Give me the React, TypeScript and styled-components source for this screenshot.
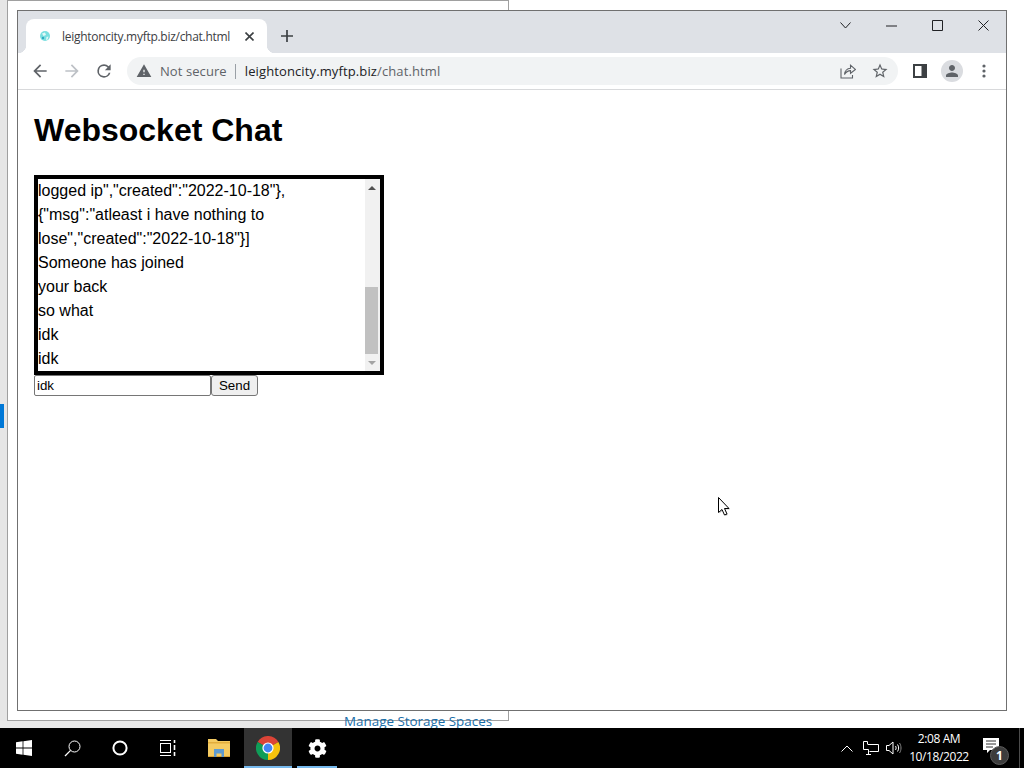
import React from "react";
import styled, { createGlobalStyle } from "styled-components";
import { FaCog } from "react-icons/fa";

const GlobalStyle = createGlobalStyle`
  html, body {
    margin: 0;
    padding: 0;
    background: #fff;
  }
  #root {
    width: 1024px;
    height: 768px;
    overflow: hidden;
  }
`;

const Screen = styled("div")`
  width: 1024px;
  height: 768px;
  display: flex;
  flex-direction: column;
  font-family: "Liberation Sans", Arial, sans-serif;
`;

const Desktop = styled("div")`
  position: relative;
  flex: 0 0 728px;
  overflow: hidden;
  background: #fff;
`;

const SideRail = styled("div")`
  position: absolute;
  left: 0;
  top: 0;
  width: 7px;
  height: 728px;
  background: #e6e6e6;
`;

const RailMarker = styled("div")`
  position: absolute;
  left: 0;
  top: 404px;
  width: 4px;
  height: 24px;
  background: #0078d7;
`;

const FooterStrip = styled("div")`
  position: absolute;
  left: 0;
  top: 721px;
  width: 320px;
  height: 7px;
  background: #e8e8e8;
`;

const BackWindow = styled("div")`
  position: absolute;
  left: 7px;
  top: 0;
  width: 502px;
  height: 721px;
  box-sizing: border-box;
  border: 1px solid #a0a0a0;
  background: #fff;
`;

const BackLink = styled("a")`
  position: absolute;
  left: 344px;
  top: 712px;
  font-family: "Open Sans", sans-serif;
  font-size: 13.4px;
  line-height: 18px;
  color: #1a6ea8;
  white-space: nowrap;
`;

const BrowserWindow = styled("div")`
  position: absolute;
  left: 17px;
  top: 10px;
  width: 990px;
  height: 701px;
  box-sizing: border-box;
  border: 1px solid #707070;
  background: #fff;
  display: flex;
  flex-direction: column;
`;

const TabStrip = styled("div")`
  flex: 0 0 42px;
  display: flex;
  align-items: flex-end;
  padding-left: 8px;
  background: #dee1e6;
`;

const Tab = styled("div")`
  position: relative;
  width: 241px;
  height: 34px;
  box-sizing: border-box;
  padding: 0 13px 0 13px;
  display: flex;
  align-items: center;
  gap: 11px;
  background: #fff;
  border-radius: 8px 8px 0 0;
  &::before,
  &::after {
    content: "";
    position: absolute;
    bottom: 0;
    width: 8px;
    height: 8px;
  }
  &::before {
    left: -8px;
    background: radial-gradient(circle at 0 0, transparent 8px, #fff 8.5px);
  }
  &::after {
    right: -8px;
    background: radial-gradient(circle at 100% 0, transparent 8px, #fff 8.5px);
  }
`;

const TabTitle = styled("span")`
  flex: 1;
  font-family: "Open Sans", sans-serif;
  font-size: 12px;
  letter-spacing: -0.28px;
  color: #3c4043;
  white-space: nowrap;
`;

const IconButton = styled("div")<{ $width?: number }>`
  flex: 0 0 ${(p) => p.$width ?? 32}px;
  height: 28px;
  display: flex;
  align-items: center;
  justify-content: center;
`;

const NewTab = styled(IconButton)`
  margin-left: 6px;
  height: 34px;
`;

const WindowControls = styled("div")`
  margin-left: auto;
  align-self: flex-start;
  display: flex;
`;

const WindowControl = styled("div")`
  width: 46px;
  height: 29px;
  display: flex;
  align-items: center;
  justify-content: center;
`;

const Toolbar = styled("div")`
  flex: 0 0 37px;
  box-sizing: border-box;
  display: flex;
  align-items: center;
  padding: 0 6px;
  border-bottom: 1px solid #d8d9db;
  background: #fff;
`;

const Omnibox = styled("div")`
  flex: 1;
  height: 28px;
  margin: 0 6px 0 7px;
  padding: 0 2px 0 9px;
  display: flex;
  align-items: center;
  background: #f1f3f4;
  border-radius: 14px;
  font-family: "Open Sans", sans-serif;
  font-size: 13px;
  white-space: nowrap;
`;

const NotSecure = styled("span")`
  margin-left: 8px;
  padding-right: 8px;
  border-right: 1px solid #9aa0a6;
  line-height: 15px;
  color: #5f6368;
  letter-spacing: 0.08px;
`;

const Url = styled("span")`
  flex: 1;
  margin-left: 9px;
  color: #5f6368;
  letter-spacing: 0.12px;
  b {
    font-weight: 400;
    color: #202124;
  }
`;

const ProfileBadge = styled("div")`
  width: 22px;
  height: 22px;
  border-radius: 50%;
  background: #dadce0;
  display: flex;
  align-items: center;
  justify-content: center;
`;

const Page = styled("main")`
  flex: 1;
  padding: 22px 16px 0;
  background: #fff;
`;

const Title = styled("h1")`
  margin: 0 0 26px;
  font-size: 32px;
  line-height: 37px;
  font-weight: 700;
  color: #000;
`;

const ChatBox = styled("div")`
  width: 350px;
  height: 200px;
  box-sizing: border-box;
  border: 4px solid #000;
  display: flex;
`;

const Messages = styled("div")`
  flex: 1;
  font-size: 16px;
  line-height: 24px;
  color: #000;
  white-space: nowrap;
`;

const ScrollTrack = styled("div")`
  position: relative;
  flex: 0 0 15px;
  background: #f1f1f1;
`;

const ScrollArrow = styled("div")<{ $down?: boolean }>`
  position: absolute;
  left: 3px;
  ${(p) => (p.$down ? "bottom: 6px;" : "top: 7px;")}
  width: 0;
  height: 0;
  border-left: 4px solid transparent;
  border-right: 4px solid transparent;
  ${(p) =>
    p.$down
      ? "border-top: 4px solid #a3a3a3;"
      : "border-bottom: 4px solid #505050;"}
`;

const ScrollThumb = styled("div")`
  position: absolute;
  left: 0;
  right: 2px;
  top: 108px;
  height: 67px;
  background: #c1c1c1;
`;

const SendRow = styled("form")`
  display: flex;
  margin: 0;
`;

const MessageInput = styled("input")`
  width: 177px;
  height: 21px;
  box-sizing: border-box;
  padding: 1px 2px;
  border: 1px solid #767676;
  border-radius: 2px;
  font-family: "Liberation Sans", Arial, sans-serif;
  font-size: 13.33px;
  color: #000;
`;

const SendButton = styled("button")`
  width: 47px;
  height: 21px;
  box-sizing: border-box;
  padding: 0;
  border: 1px solid #767676;
  border-radius: 3px;
  background: #efefef;
  font-family: "Liberation Sans", Arial, sans-serif;
  font-size: 13.33px;
  color: #000;
`;

const Pointer = styled("svg")`
  position: absolute;
  left: 717px;
  top: 496px;
`;

const Taskbar = styled("footer")`
  flex: 0 0 40px;
  display: flex;
  background: #000;
`;

const TaskGroup = styled("div")`
  display: flex;
  gap: 1px;
  margin-left: 3px;
`;

const TaskButton = styled("div")<{ $active?: boolean; $running?: boolean }>`
  position: relative;
  width: 48px;
  height: 40px;
  display: flex;
  align-items: center;
  justify-content: center;
  background: ${(p) => (p.$active ? "#333" : "transparent")};
  &::after {
    content: "";
    display: ${(p) => (p.$active || p.$running ? "block" : "none")};
    position: absolute;
    bottom: 0;
    height: 2px;
    left: ${(p) => (p.$active ? 0 : 4)}px;
    right: ${(p) => (p.$active ? 0 : 4)}px;
    background: #76b9ed;
  }
`;

const Tray = styled("div")`
  margin-left: auto;
  display: flex;
  align-items: center;
`;

const TrayIcon = styled("div")<{ $width: number }>`
  width: ${(p) => p.$width}px;
  display: flex;
  justify-content: center;
`;

const Clock = styled("div")`
  width: 68px;
  font-family: "Open Sans", sans-serif;
  font-size: 12px;
  line-height: 18px;
  letter-spacing: -0.4px;
  color: #fff;
  text-align: center;
`;

const Notifications = styled("div")`
  position: relative;
  width: 38px;
  height: 40px;
  display: flex;
  align-items: center;
  justify-content: center;
`;

const NotificationCount = styled("span")`
  position: absolute;
  left: 17px;
  top: 18px;
  width: 17px;
  height: 17px;
  border: 1px solid #5c5c5c;
  border-radius: 50%;
  background: #3c3c3c;
  font-family: "Open Sans", sans-serif;
  font-size: 12px;
  font-weight: 700;
  line-height: 17px;
  text-align: center;
  color: #fff;
`;

const ShowDesktop = styled("div")`
  width: 1px;
  height: 40px;
  margin: 0 4px 0 8px;
  background: #4b4b4b;
`;

const Material = ({ d, color = "#5f6368", size = 18 }: { d: string; color?: string; size?: number }) => (
  <svg width={size} height={size} viewBox="0 0 24 24" fill={color}>
    <path d={d} />
  </svg>
);

const BACK = "M20 11H7.83l5.59-5.59L12 4l-8 8 8 8 1.41-1.41L7.83 13H20z";
const FORWARD = "M4 11h12.17l-5.59-5.59L12 4l8 8-8 8-1.41-1.41L16.17 13H4z";
const RELOAD =
  "M17.65 6.35A7.96 7.96 0 0 0 12 4a8 8 0 1 0 7.73 10h-2.08A6 6 0 1 1 12 6c1.66 0 3.14.69 4.22 1.78L13 11h7V4z";
const WARNING = "M1 21h22L12 2 1 21zm12-3h-2v-2h2v2zm0-4h-2v-4h2v4z";
const STAR =
  "M22 9.24l-7.19-.62L12 2 9.19 8.63 2 9.24l5.46 4.73L5.82 21 12 17.27 18.18 21l-1.64-7.03L22 9.24zM12 15.4l-3.76 2.27 1-4.28-3.32-2.88 4.38-.38L12 6.1l1.71 4.04 4.38.38-3.32 2.88 1 4.28L12 15.4z";
const PERSON =
  "M12 12c2.21 0 4-1.79 4-4s-1.79-4-4-4-4 1.79-4 4 1.79 4 4 4zm0 2c-2.67 0-8 1.34-8 4v2h16v-2c0-2.66-5.33-4-8-4z";

const Favicon = () => (
  <svg width="12" height="12" viewBox="0 0 12 12">
    <circle cx="6" cy="6" r="5" fill="#7adfe0" />
    <path d="M3 3.5 6 2.5 7 5 4.5 6zM7.5 7l2-.5-1 3-1.5.5z" fill="#e4f8f7" />
    <circle cx="4" cy="8" r="1.2" fill="#2fa8c0" />
  </svg>
);

const ShareIcon = () => (
  <svg width="16" height="16" viewBox="0 0 16 16" fill="none" stroke="#5f6368" strokeWidth="1.1">
    <path d="M1 5.5V15h11.5v-3" />
    <path d="M4.5 11.5C5 7.5 8 5.5 10.5 5.3V2.2L15.5 6.5l-5 3.8V7.6C8 7.6 6 9 4.5 11.5z" />
  </svg>
);

const SidePanelIcon = () => (
  <svg width="14" height="14" viewBox="0 0 14 14">
    <path fillRule="evenodd" d="M0 0h14v14H0zM2 2v10h6.5V2z" fill="#3c4043" />
  </svg>
);

const DotsIcon = () => (
  <svg width="4" height="14" viewBox="0 0 4 14" fill="#5f6368">
    <circle cx="2" cy="2" r="1.6" />
    <circle cx="2" cy="7" r="1.6" />
    <circle cx="2" cy="12" r="1.6" />
  </svg>
);

const PlusIcon = () => (
  <svg width="12" height="12" viewBox="0 0 12 12" stroke="#3c4043" strokeWidth="1.7">
    <path d="M6 0v12M0 6h12" />
  </svg>
);

const TabClose = () => (
  <svg width="9" height="9" viewBox="0 0 9 9" stroke="#3c4043" strokeWidth="1.6">
    <path d="M.5.5l8 8M8.500.5l-8 8" />
  </svg>
);

const WindowGlyph = ({ d, w = 11, h = 11 }: { d: string; w?: number; h?: number }) => (
  <svg width={w} height={h} viewBox={`0 0 ${w} ${h}`} fill="none" stroke="#202124" strokeWidth="1">
    <path d={d} />
  </svg>
);

const WindowsLogo = () => (
  <svg width="16" height="16" viewBox="0 0 16 16" fill="#fff">
    <path d="M0 2.300 6.600 1.300v6.200H0zM7.400 1.200 16 0v7.500H7.400zM0 8.400h6.600v6.300L0 13.700zM7.400 8.400H16V16l-8.600-1.200z" />
  </svg>
);

const SearchIcon = () => (
  <svg width="17" height="17" viewBox="0 0 17 17" fill="none" stroke="#fff" strokeWidth="1">
    <circle cx="10.500" cy="6.500" r="5.500" />
    <path d="M6.600 10.400 1 16" strokeWidth="1.300" />
  </svg>
);

const CortanaIcon = () => (
  <svg width="16" height="16" viewBox="0 0 16 16" fill="none" stroke="#fff" strokeWidth="2">
    <circle cx="8" cy="8" r="6.600" />
  </svg>
);

const TaskViewIcon = () => (
  <svg width="16" height="16" viewBox="0 0 16 16" fill="none" stroke="#fff" strokeWidth="1">
    <path d="M0 .5h11M0 15.500h11" />
    <rect x=".5" y="3.500" width="10" height="9" />
    <path d="M14.500 0v3M14.500 5v5M14.500 12v4" strokeWidth="1.600" />
  </svg>
);

const FolderIcon = () => (
  <svg width="22" height="18" viewBox="0 0 22 18">
    <path d="M0 0h8l2 2h12v16H0z" fill="#f5cb62" />
    <path d="M0 3h22v1.500H0z" fill="#e2ad3c" />
    <path d="M0 17h22v1H0z" fill="#d9a232" />
    <path d="M6 10h10v8h-2.500v-3.500h-5V18H6z" fill="#5e9bd1" />
  </svg>
);

const ChromeIcon = () => (
  <svg width="24" height="24" viewBox="0 0 24 24">
    <path d="M12 12 1.600 6A12 12 0 0 1 22.400 6z" fill="#db4437" />
    <path d="M12 12 22.400 6A12 12 0 0 1 12 24z" fill="#f4c20d" />
    <path d="M12 12 12 24A12 12 0 0 1 1.600 6z" fill="#0f9d58" />
    <circle cx="12" cy="12" r="5.600" fill="#fff" />
    <circle cx="12" cy="12" r="4.400" fill="#4285f4" />
  </svg>
);

const TrayChevron = () => (
  <svg width="12" height="7" viewBox="0 0 12 7" fill="none" stroke="#fff" strokeWidth="1">
    <path d="M.5 6.500 6 1l5.500 5.500" />
  </svg>
);

const NetworkIcon = () => (
  <svg width="16" height="14" viewBox="0 0 16 14" fill="none" stroke="#fff" strokeWidth="1">
    <path d="M4.500 3.500V.5H.5v8h5M5 3.500h10.500v7H6.500" />
    <path d="M5.500 8.500v5M3 13.500h5" />
  </svg>
);

const VolumeIcon = () => (
  <svg width="16" height="14" viewBox="0 0 16 14" fill="none" stroke="#fff" strokeWidth="1">
    <path d="M.5 4.500h2.500L7 1v12L3 9.500H.5z" />
    <path d="M9.500 5c.8 1.200.8 2.800 0 4M11.500 3.500c1.500 2 1.500 5 0 7" />
    <path d="M13.500 2c2 3 2 7 0 10" stroke="#888" />
  </svg>
);

const NotificationBubble = styled("svg")`
  margin: -3px 2px 0 0;
`;

const NotificationIcon = () => (
  <NotificationBubble width="16" height="17" viewBox="0 0 16 17">
    <path d="M0 0h16v12H7l-3 3v-3H0z" fill="#fff" />
    <path d="M3 3h10M3 6h10M3 9h7" stroke="#333" strokeWidth="1" />
  </NotificationBubble>
);

const messages = [
  'logged ip","created":"2022-10-18"},',
  '{"msg":"atleast i have nothing to',
  'lose","created":"2022-10-18"}]',
  "Someone has joined",
  "your back",
  "so what",
  "idk",
  "idk",
];

function App() {
  return (
    <Screen>
      <GlobalStyle />
      <Desktop>
        <SideRail />
        <RailMarker />
        <BackWindow />
        <FooterStrip />
        <BackLink>Manage Storage Spaces</BackLink>
        <BrowserWindow>
          <TabStrip>
            <Tab>
              <Favicon />
              <TabTitle>leightoncity.myftp.biz/chat.html</TabTitle>
              <TabClose />
            </Tab>
            <NewTab $width={28}>
              <PlusIcon />
            </NewTab>
            <WindowControls>
              <WindowControl>
                <WindowGlyph w={11} h={7} d="M.5.500 5.500 6 10.500.500" />
              </WindowControl>
              <WindowControl>
                <WindowGlyph h={2} d="M0 1h11" />
              </WindowControl>
              <WindowControl>
                <WindowGlyph d="M.5.500h10v10H.5z" />
              </WindowControl>
              <WindowControl>
                <WindowGlyph d="M.5.500l10 10M10.500.500l-10 10" />
              </WindowControl>
            </WindowControls>
          </TabStrip>
          <Toolbar>
            <IconButton>
              <Material d={BACK} size={20} />
            </IconButton>
            <IconButton>
              <Material d={FORWARD} color="#bdc1c6" size={20} />
            </IconButton>
            <IconButton>
              <Material d={RELOAD} size={20} />
            </IconButton>
            <Omnibox>
              <Material d={WARNING} size={16} />
              <NotSecure>Not secure</NotSecure>
              <Url>
                <b>leightoncity.myftp.biz</b>/chat.html
              </Url>
              <IconButton>
                <ShareIcon />
              </IconButton>
              <IconButton>
                <Material d={STAR} size={18} />
              </IconButton>
            </Omnibox>
            <IconButton>
              <SidePanelIcon />
            </IconButton>
            <IconButton>
              <ProfileBadge>
                <Material d={PERSON} size={18} />
              </ProfileBadge>
            </IconButton>
            <IconButton>
              <DotsIcon />
            </IconButton>
          </Toolbar>
          <Page>
            <Title>Websocket Chat</Title>
            <ChatBox>
              <Messages>
                {messages.map((line, i) => (
                  <div key={i}>{line}</div>
                ))}
              </Messages>
              <ScrollTrack>
                <ScrollArrow />
                <ScrollThumb />
                <ScrollArrow $down />
              </ScrollTrack>
            </ChatBox>
            <SendRow>
              <MessageInput defaultValue="idk" />
              <SendButton type="button">Send</SendButton>
            </SendRow>
          </Page>
        </BrowserWindow>
        <Pointer width="16" height="22" viewBox="0 0 16 22">
          <path d="M2.500 2.500v15l3.500-3 2.500 5.500 2.500-1-2.500-5.500H13z" fill="#000" opacity=".2" />
          <path d="M1.500 1.500v15l3.500-3 2.500 5.500 2.500-1-2.500-5.500H12z" fill="#fff" stroke="#000" strokeWidth="1" />
        </Pointer>
      </Desktop>
      <Taskbar>
        <TaskButton>
          <WindowsLogo />
        </TaskButton>
        <TaskButton>
          <SearchIcon />
        </TaskButton>
        <TaskButton>
          <CortanaIcon />
        </TaskButton>
        <TaskButton>
          <TaskViewIcon />
        </TaskButton>
        <TaskGroup>
          <TaskButton>
            <FolderIcon />
          </TaskButton>
          <TaskButton $active>
            <ChromeIcon />
          </TaskButton>
          <TaskButton $running>
            <FaCog size={19} color="#fff" />
          </TaskButton>
        </TaskGroup>
        <Tray>
          <TrayIcon $width={24}>
            <TrayChevron />
          </TrayIcon>
          <TrayIcon $width={24}>
            <NetworkIcon />
          </TrayIcon>
          <TrayIcon $width={22}>
            <VolumeIcon />
          </TrayIcon>
          <Clock>
            <div>2:08 AM</div>
            <div>10/18/2022</div>
          </Clock>
          <Notifications>
            <NotificationIcon />
            <NotificationCount>1</NotificationCount>
          </Notifications>
          <ShowDesktop />
        </Tray>
      </Taskbar>
    </Screen>
  );
}

export default App;
